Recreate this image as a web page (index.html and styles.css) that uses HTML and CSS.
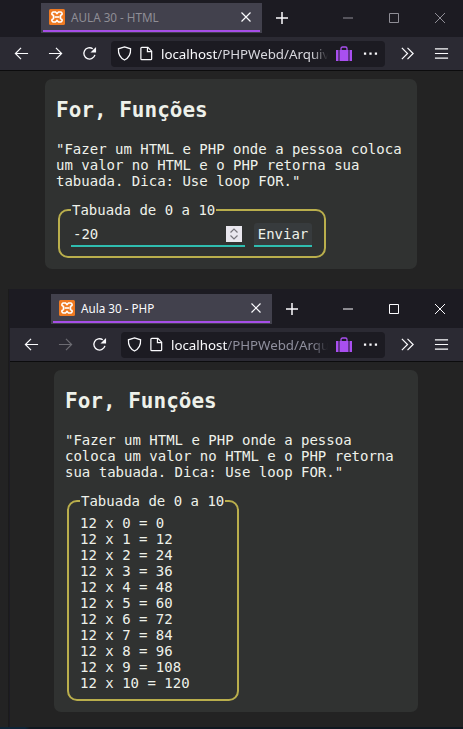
FILE: index.html
```html
<!DOCTYPE html>
<html lang="en">
<head>
    <meta charset="UTF-8">
    <meta name="viewport" content="width=device-width, initial-scale=1.0">
    <title>Aula 30</title>
    <link rel="stylesheet" href="styles.css">
</head>
<body>
<svg class="defs" width="0" height="0">
    <symbol id="xampp" viewBox="0 0 16 16">
        <rect width="16" height="16" rx="1.500" fill="#ef7a22"/>
        <path d="M4.500 3h2L8 4.500 9.500 3h2A1.800 1.800 0 0 1 13 5.500L11.500 6.500v3L13 10.500A1.800 1.800 0 0 1 11.500 13h-2L8 11.500 6.500 13h-2A1.800 1.800 0 0 1 3 10.500L4.500 9.500v-3L3 5.500A1.800 1.800 0 0 1 4.500 3z" fill="none" stroke="#fff" stroke-width="1.600"/>
        <path d="M5.500 8h5" stroke="#fff" stroke-width="1.600"/>
    </symbol>
    <symbol id="close" viewBox="0 0 16 16"><path d="M3.500 3.500l9 9M12.500 3.500l-9 9" fill="none" stroke="currentColor" stroke-width="1.200"/></symbol>
    <symbol id="plus" viewBox="0 0 16 16"><path d="M8 2v12M2 8h12" fill="none" stroke="currentColor" stroke-width="1.500"/></symbol>
    <symbol id="back" viewBox="0 0 16 16"><path d="M15 8H1.500M7.500 2l-6 6 6 6" fill="none" stroke="currentColor" stroke-width="1.300"/></symbol>
    <symbol id="forward" viewBox="0 0 16 16"><path d="M1 8h13.500M8.500 2l6 6-6 6" fill="none" stroke="currentColor" stroke-width="1.300"/></symbol>
    <symbol id="reload" viewBox="0 0 16 16"><path d="M13.800 9.500A6 6 0 1 1 11.500 3" fill="none" stroke="currentColor" stroke-width="1.400"/><path d="M15 1v6H9z" fill="currentColor"/></symbol>
    <symbol id="shield" viewBox="0 0 16 16"><path d="M8 1l6.500 2c.3 5.500-1.500 9.500-6.500 12C3 12.500 1.200 8.500 1.500 3z" fill="none" stroke="currentColor" stroke-width="1.300"/></symbol>
    <symbol id="file" viewBox="0 0 16 16"><path d="M3 1.500h6.500L13.500 5.500v8a1 1 0 0 1-1 1h-9.500a1 1 0 0 1-1-1v-11a1 1 0 0 1 1-1z" fill="none" stroke="currentColor" stroke-width="1.300"/><path d="M9 1.500v4.500h4.500" fill="none" stroke="currentColor" stroke-width="1.300"/></symbol>
    <symbol id="bag" viewBox="0 0 16 16"><path d="M5 4V2.500A1.500 1.500 0 0 1 6.500 1h3A1.500 1.500 0 0 1 11 2.500V4" fill="none" stroke="#a94ff0" stroke-width="1.300"/><path d="M0 4h2.500v11H0zM3.500 4h9v11h-9zM13.500 4H16v11h-2.500z" fill="#a94ff0"/></symbol>
    <symbol id="more" viewBox="0 0 16 16"><path d="M1 8h2.400M6.800 8h2.400M12.600 8H15" fill="none" stroke="currentColor" stroke-width="2.400"/></symbol>
    <symbol id="overflow" viewBox="0 0 16 16"><path d="M2 2l6 6-6 6M8 2l6 6-6 6" fill="none" stroke="currentColor" stroke-width="1.300"/></symbol>
    <symbol id="menu" viewBox="0 0 16 16"><path d="M1 3h14M1 8h14M1 13h14" fill="none" stroke="currentColor" stroke-width="1.300"/></symbol>
    <symbol id="minimize" viewBox="0 0 16 16"><path d="M3 8h10" fill="none" stroke="currentColor" stroke-width="1"/></symbol>
    <symbol id="maximize" viewBox="0 0 16 16"><path d="M3.500 3.500h9v9h-9z" fill="none" stroke="currentColor" stroke-width="1"/></symbol>
    <symbol id="winclose" viewBox="0 0 16 16"><path d="M3 3l10 10M13 3L3 13" fill="none" stroke="currentColor" stroke-width="1"/></symbol>
</svg>

<div class="window window-back">
    <div class="titlebar">
        <div class="tab">
            <svg class="tab-icon"><use href="#xampp"/></svg>
            <span class="tab-title">AULA 30 - HTML</span>
            <svg class="tab-close"><use href="#close"/></svg>
        </div>
        <svg class="new-tab"><use href="#plus"/></svg>
        <div class="win-controls">
            <svg><use href="#minimize"/></svg>
            <svg><use href="#maximize"/></svg>
            <svg><use href="#winclose"/></svg>
        </div>
    </div>
    <div class="toolbar">
        <button class="tool"><svg><use href="#back"/></svg></button>
        <button class="tool"><svg><use href="#forward"/></svg></button>
        <button class="tool"><svg><use href="#reload"/></svg></button>
        <div class="urlbar">
            <svg class="url-icon"><use href="#shield"/></svg>
            <svg class="url-icon"><use href="#file"/></svg>
            <span class="url-text"><span class="host">localhost</span>/PHPWebd/Arquiv</span>
            <svg class="url-bag"><use href="#bag"/></svg>
            <svg class="url-more"><use href="#more"/></svg>
        </div>
        <button class="tool"><svg><use href="#overflow"/></svg></button>
        <button class="tool"><svg><use href="#menu"/></svg></button>
    </div>
    <div class="page">
        <div class="card">
            <h1>For, Funções</h1>
            <p>"Fazer um HTML e PHP onde a pessoa coloca um valor no HTML e o PHP retorna sua tabuada. Dica: Use loop FOR."</p>
            <form onsubmit="return false">
                <fieldset class="form-box">
                    <legend>Tabuada de 0 a 10</legend>
                    <div class="number-field">
                        <span class="number-value">-20</span>
                        <span class="spinner">
                            <svg viewBox="0 0 16 16"><path d="M4.500 6.500L8 3l3.500 3.500M4.500 9.500L8 13l3.500-3.500" fill="none" stroke="#77767c" stroke-width="1.200"/></svg>
                        </span>
                    </div>
                    <button class="send">Enviar</button>
                </fieldset>
            </form>
        </div>
    </div>
</div>

<div class="window window-front">
    <div class="titlebar">
        <div class="tab">
            <svg class="tab-icon"><use href="#xampp"/></svg>
            <span class="tab-title">Aula 30 - PHP</span>
            <svg class="tab-close"><use href="#close"/></svg>
        </div>
        <svg class="new-tab"><use href="#plus"/></svg>
        <div class="win-controls">
            <svg><use href="#minimize"/></svg>
            <svg><use href="#maximize"/></svg>
            <svg><use href="#winclose"/></svg>
        </div>
    </div>
    <div class="toolbar">
        <button class="tool"><svg><use href="#back"/></svg></button>
        <button class="tool tool-off"><svg><use href="#forward"/></svg></button>
        <button class="tool"><svg><use href="#reload"/></svg></button>
        <div class="urlbar">
            <svg class="url-icon"><use href="#shield"/></svg>
            <svg class="url-icon"><use href="#file"/></svg>
            <span class="url-text"><span class="host">localhost</span>/PHPWebd/Arqu</span>
            <svg class="url-bag"><use href="#bag"/></svg>
            <svg class="url-more"><use href="#more"/></svg>
        </div>
        <button class="tool"><svg><use href="#overflow"/></svg></button>
        <button class="tool"><svg><use href="#menu"/></svg></button>
    </div>
    <div class="page">
        <div class="card">
            <h1>For, Funções</h1>
            <p>"Fazer um HTML e PHP onde a pessoa coloca um valor no HTML e o PHP retorna sua tabuada. Dica: Use loop FOR."</p>
            <fieldset class="result-box">
                <legend>Tabuada de 0 a 10</legend>
                <div>12 x 0 = 0</div>
                <div>12 x 1 = 12</div>
                <div>12 x 2 = 24</div>
                <div>12 x 3 = 36</div>
                <div>12 x 4 = 48</div>
                <div>12 x 5 = 60</div>
                <div>12 x 6 = 72</div>
                <div>12 x 7 = 84</div>
                <div>12 x 8 = 96</div>
                <div>12 x 9 = 108</div>
                <div>12 x 10 = 120</div>
            </fieldset>
        </div>
    </div>
</div>
<div class="bottom-edge"></div>
</body>
</html>
```

FILE: styles.css
```css
* {
    box-sizing: border-box;
}
html, body {
    margin: 0;
    height: 729px;
    overflow: hidden;
    background-color: #232323;
}
.defs {
    display: block;
    height: 0;
}

/* browser chrome */
.window {
    font-family: "Noto Sans", Arial, sans-serif;
    color: #fbfbfe;
}
.window-front {
    margin-left: 8px;
    border-left: 1px solid #1b1b1b;
    padding-left: 1px;
    background-color: #1c1b22;
}
.titlebar {
    display: flex;
    align-items: flex-start;
    height: 37px;
    padding: 3px 0 0 41px;
    background-color: #1c1b22;
}
.window-front .titlebar {
    height: 39px;
    padding: 5px 0 0 41px;
}
.tab {
    position: relative;
    display: flex;
    align-items: center;
    width: 221px;
    height: 30px;
    padding: 0 8px 2px 8px;
    background-color: #42414d;
}
.tab::after {
    content: "";
    position: absolute;
    left: 2px;
    right: 2px;
    bottom: 1px;
    height: 2px;
    background-color: #a64ee8;
}
.tab-icon {
    width: 16px;
    height: 16px;
    flex: none;
}
.tab-title {
    flex: 1;
    margin-left: 6px;
    font-size: 11.7px;
    white-space: nowrap;
}
.tab-close {
    width: 16px;
    height: 16px;
}
.new-tab {
    width: 16px;
    height: 16px;
    margin: 7px 0 0 12px;
}
.win-controls {
    display: flex;
    gap: 30px;
    margin: 7px 15px 0 auto;
}
.win-controls svg {
    width: 16px;
    height: 16px;
}
.window-back .tab-title,
.window-back .win-controls {
    color: #8f8e96;
}
.toolbar {
    display: flex;
    align-items: center;
    height: 34px;
    padding: 0 5px 0 4px;
    background-color: #2b2a33;
    border-bottom: 1px solid #0c0c0d;
}
.tool {
    display: flex;
    align-items: center;
    justify-content: center;
    width: 34px;
    height: 30px;
    padding: 0;
    border: none;
    background: none;
    color: #fbfbfe;
}
.tool svg {
    width: 15px;
    height: 15px;
}
.tool-off {
    color: #6c6b72;
}
.urlbar {
    display: flex;
    align-items: center;
    flex: 1;
    min-width: 0;
    height: 26px;
    margin: 0 5px;
    padding: 0 7px 0 6px;
    background-color: #1c1b22;
    border-radius: 4px;
}
.url-icon {
    width: 15px;
    height: 15px;
    margin-right: 7px;
    flex: none;
}
.url-text {
    flex: 1;
    min-width: 0;
    font-size: 13.3px;
    white-space: nowrap;
    color: #8f8f9d;
    -webkit-mask-image: linear-gradient(to left, transparent, #000 16px);
    mask-image: linear-gradient(to left, transparent, #000 16px);
}
.window-back .url-text {
    color: #d8d8de;
}
.host {
    color: #fbfbfe;
}
.url-bag {
    width: 16px;
    height: 16px;
    margin: 0 11px 0 8px;
    flex: none;
}
.url-more {
    width: 15px;
    height: 15px;
    flex: none;
}

/* page content */
.page {
    padding: 8px 0;
    background-color: #232323;
    font-family: "DejaVu Sans Mono", monospace;
    font-size: 14px;
    line-height: 16px;
    color: #eef1ea;
}
.window-back .page {
    height: 218px;
}
.window-front .page {
    height: 365px;
}
.card {
    width: 372px;
    margin: 0 0 0 45px;
    padding: 16px 12px 11px 11px;
    background-color: #303231;
    border-radius: 7px;
}
.window-front .card {
    width: 364px;
    margin-left: 44px;
    padding-bottom: 11px;
}
h1 {
    margin: 0;
    font-size: 21px;
    line-height: 30px;
}
p {
    margin: 16px 0 13px;
}
fieldset {
    margin: 0;
    border: 2px solid #b9ae4c;
    border-radius: 10px;
}
legend {
    padding: 0 1px;
}
.form-box {
    display: flex;
    align-items: flex-start;
    width: 267px;
    height: 56px;
    margin-left: 2px;
    padding: 5px 12px 0 11px;
}
.number-field {
    display: inline-flex;
    align-items: center;
    justify-content: space-between;
    width: 174px;
    height: 24px;
    padding: 0 3px 0 2px;
    border-bottom: 2px solid #2fbdb0;
    font-size: 14px;
    vertical-align: top;
}
.spinner {
    display: block;
    width: 16px;
    height: 16px;
    background-color: #e9e7ee;
}
.spinner svg {
    display: block;
}
.send {
    width: 58px;
    height: 24px;
    margin-left: 9px;
    padding: 0;
    border: none;
    border-bottom: 2px solid #2fbdb0;
    border-radius: 3px 3px 0 0;
    background-color: #373b3d;
    color: inherit;
    font: inherit;
}
.result-box {
    width: 172px;
    margin-left: 2px;
    padding: 6px 11px 8px 11px;
}
.bottom-edge {
    height: 2px;
    background: linear-gradient(to right, #0e2436 25px, #101820 30px);
}
```
